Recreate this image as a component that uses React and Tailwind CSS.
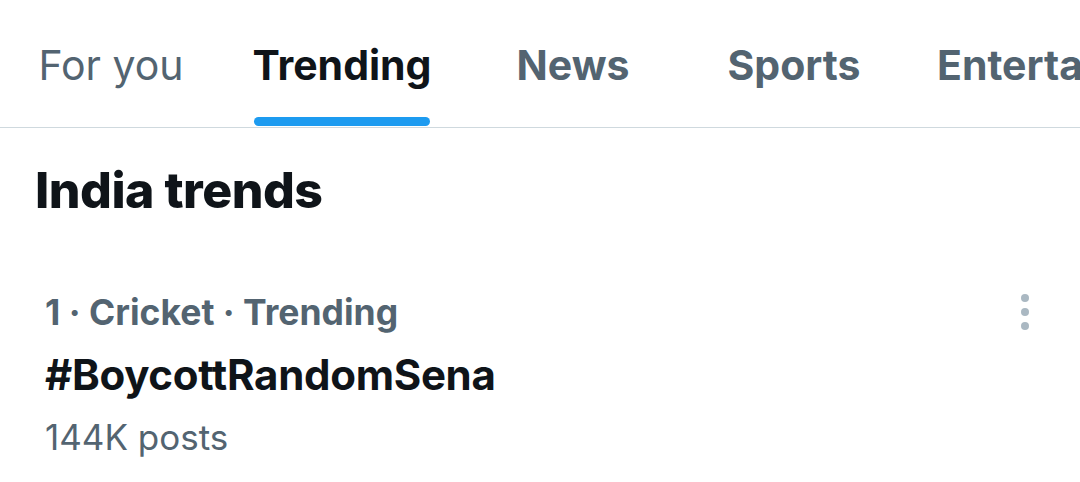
import React from 'react';

const tabs = [
    { label: 'For you', w: 'w-[222px]', active: false, weight: 'font-normal' },
    { label: 'Trending', w: 'w-[240px]', active: true, weight: 'font-bold' },
    { label: 'News', w: 'w-[222px]', active: false, weight: 'font-bold' },
    { label: 'Sports', w: 'w-[220px]', active: false, weight: 'font-bold' },
];

export default function App() {
    return (
        <div className="w-[1080px] h-[482px] bg-white overflow-hidden font-['Inter',sans-serif]">
            {/* Top tabs */}
            <div className="flex h-[128px] border-b border-[#cfd9de] whitespace-nowrap">
                {tabs.map((t) => (
                    <div key={t.label} className={`${t.w} shrink-0 flex flex-col items-center`}>
                        <div className={`h-[117px] flex items-center pt-[14px] text-[41px] ${t.weight} ${t.active ? 'text-[#0f1419]' : 'text-[#536471]'}`}>
                            {t.label}
                        </div>
                        {t.active && <div className="h-[9px] w-[176px] rounded-full bg-[#1d9bf0]" />}
                    </div>
                ))}
                <div className="shrink-0 pl-[33px] h-[117px] flex items-center pt-[14px] text-[41px] font-bold text-[#536471]">
                    Entertainment
                </div>
            </div>

            {/* Section title */}
            <div className="px-[35px] pt-[32px] text-[50px] font-extrabold text-[#0f1419] tracking-[-0.5px] leading-[60px]">
                India trends
            </div>

            {/* Trend item */}
            <div className="flex pl-[45px] pr-[51px] pt-[62px]">
                <div className="flex-1">
                    <div className="text-[35.5px] font-bold text-[#536471] leading-[62px]">1 · Cricket · Trending</div>
                    <div className="text-[42px] font-bold text-[#0f1419] leading-[62px] tracking-[-0.3px]">#BoycottRandomSena</div>
                    <div className="text-[35px] text-[#536471] leading-[62px]">144K posts</div>
                </div>
                <div className="flex flex-col items-center gap-[6px] pt-[12px]">
                    <span className="w-[8px] h-[8px] rounded-full bg-[#aab8c2]" />
                    <span className="w-[8px] h-[8px] rounded-full bg-[#aab8c2]" />
                    <span className="w-[8px] h-[8px] rounded-full bg-[#aab8c2]" />
                </div>
            </div>
        </div>
    );
}
